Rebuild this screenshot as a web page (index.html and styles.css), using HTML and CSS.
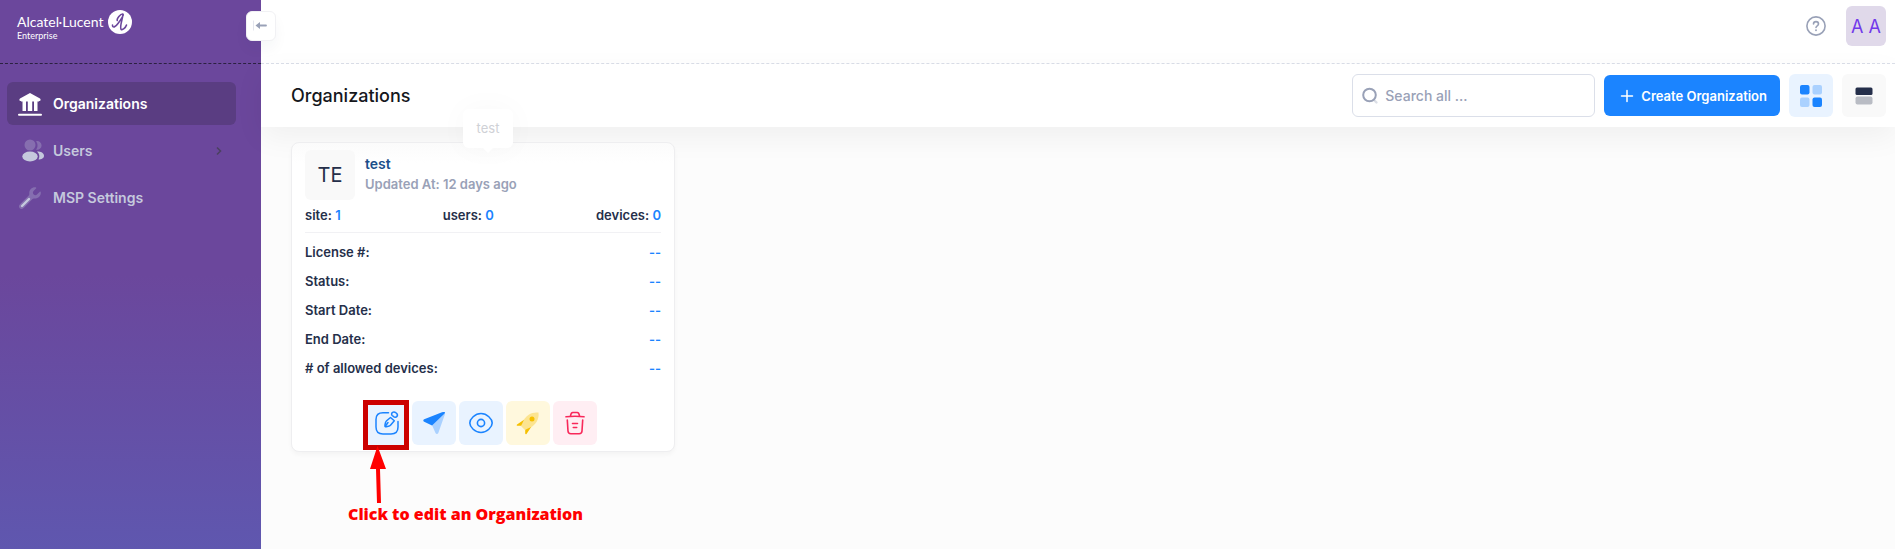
FILE: index.html
```html
<!DOCTYPE html>
<html lang="en">
<head>
    <meta charset="UTF-8">
    <meta name="viewport" content="width=device-width, initial-scale=1.0">
    <title>Organizations</title>
    <link rel="stylesheet" href="styles.css">
</head>
<body>
    <aside class="sidebar">
        <div class="brand">
            <a href="#" class="logo">
                <span class="logo-text">
                    <span class="logo-name">Alcatel·Lucent</span>
                    <span class="logo-sub">Enterprise</span>
                </span>
                <svg class="logo-mark" viewBox="0 0 24 24" width="24" height="24">
                    <circle cx="12" cy="12" r="12" fill="#fff"/>
                    <path d="M4.500 15C4.500 18.500 7.500 17 10 13.500C13 9.500 16.500 4.500 14.800 4C12.500 3.700 8.500 9 9.300 10.500M15 4.500C14.500 9 11.500 17 13 19.300C14.500 20.500 17.500 18 18.500 15" fill="none" stroke="#6b479c" stroke-width="1.600" stroke-linecap="round"/>
                </svg>
            </a>
            <button class="toggle" aria-label="Collapse menu">
                <svg viewBox="0 0 16 16" width="16" height="16">
                    <path d="M.5 2.500v10" stroke="#e4e6ee" stroke-width="1"/>
                    <path d="M6 7.500h7" stroke="#99a1b7" stroke-width="1.800" stroke-linecap="round"/>
                    <path d="M7 4v7L2.500 7.500z" fill="#99a1b7"/>
                </svg>
            </button>
        </div>
        <nav class="menu">
            <a href="#" class="menu-item active">
                <svg viewBox="0 0 24 24" width="24" height="24" fill="#fff">
                    <path d="M12 1L22 6.500C23 7.200 22.800 9 21.500 9H21V19H3V9H2.500C1.200 9 1 7.200 2 6.500z"/>
                    <path d="M3 9.500h1.500V19.500H3zM8 9.500h1.800V19.500H8zM14.200 9.500H16V19.500H14.200zM19.500 9.500H21V19.500H19.500z" fill="#5a3d82"/>
                    <path d="M1 22.800h22" stroke="#fff" stroke-width="2" stroke-linecap="round"/>
                </svg>
                <span>Organizations</span>
            </a>
            <a href="#" class="menu-item">
                <svg viewBox="0 0 24 24" width="24" height="24" fill="#c5c9dd">
                    <g opacity=".3"><circle cx="12" cy="6" r="5.500"/><path d="M18 2.300a4.300 4.300 0 1 1 0 8.200c2-2 2-6 0-8.200z"/></g>
                    <ellipse cx="12" cy="17.500" rx="7.700" ry="5"/>
                    <path d="M19 12.500c4 0 7 1.500 7 4.300 0 2.500-2.500 3.700-5.500 3.700 1.500-3 1-6-1.500-8z"/>
                </svg>
                <span>Users</span>
                <svg class="arrow" viewBox="0 0 8 10" width="8" height="10">
                    <path d="M2 1.500L5.500 5L2 8.500" fill="none" stroke="#4b4260" stroke-width="1.600"/>
                </svg>
            </a>
            <a href="#" class="menu-item">
                <svg viewBox="0 0 24 24" width="24" height="24" fill="#c5c9dd">
                    <path opacity=".3" d="M17.500 1.200c-3.500-.3-6.500 2.500-6.200 6.300.1 1.200-.2 1.800-1 2.600L2 18.300c-1.300 1.300-1.300 2.900-.3 3.900s2.700 1 4-.3l8.300-8.300c.8-.8 1.300-1 2.500-1 3.800.1 6.700-2.900 6.300-6.300-.1-.7-.7-.9-1.200-.4l-2.400 2.400c-1.200 1.200-2.400 1.200-3.500.1s-1.100-2.400.1-3.600L18 2.600c.6-.6.300-1.300-.5-1.400z"/>
                    <path d="M4 20L11 13" stroke="#c5c9dd" stroke-width="2.400" stroke-linecap="round"/>
                </svg>
                <span>MSP Settings</span>
            </a>
        </nav>
    </aside>

    <div class="wrapper">
        <header class="header">
            <button class="help" aria-label="Help">
                <svg viewBox="0 0 20 20" width="20" height="20" fill="none" stroke="#99a1b7" stroke-width="1.600" stroke-linecap="round">
                    <circle cx="10" cy="10" r="9.100"/>
                    <path d="M7.500 8c0-3.200 5-3.200 5 0 0 1.800-2.500 1.800-2.500 3.500"/>
                    <path d="M10 14.200v.1" stroke-width="1.900"/>
                </svg>
            </button>
            <button class="profile">A A</button>
        </header>

        <div class="toolbar">
            <h1>Organizations</h1>
            <div class="actions">
                <label class="search">
                    <svg viewBox="0 0 18 18" width="18" height="18" fill="none" stroke="#99a1b7">
                        <path d="M13.500 13.500L15.500 15.500" stroke-width="2.400" stroke-linecap="round" opacity=".35"/>
                        <circle cx="8.500" cy="8" r="6.300" stroke-width="2"/>
                    </svg>
                    <input type="text" placeholder="Search all ..." aria-label="Search all">
                </label>
                <button class="create-btn">
                    <svg viewBox="0 0 14 14" width="14" height="14" stroke="#fff" stroke-width="1.500" stroke-linecap="round">
                        <path d="M7 1.500v11M1.500 7h11"/>
                    </svg>
                    Create Organization
                </button>
                <button class="view-btn view-active" aria-label="Grid view">
                    <svg viewBox="0 0 22 22" width="22" height="22" fill="#1b84ff">
                        <rect width="9.500" height="9.500" rx="2"/>
                        <rect x="12.500" width="9.500" height="9.500" rx="2" opacity=".3"/>
                        <rect y="12.500" width="9.500" height="9.500" rx="2" opacity=".3"/>
                        <rect x="12.500" y="12.500" width="9.500" height="9.500" rx="2"/>
                    </svg>
                </button>
                <button class="view-btn" aria-label="List view">
                    <svg viewBox="0 0 18 18" width="18" height="18" fill="#252f4a">
                        <rect x=".5" y=".5" width="17" height="7.500" rx="1.500"/>
                        <rect x=".5" y="9.500" width="17" height="8" rx="2" opacity=".3"/>
                    </svg>
                </button>
            </div>
        </div>

        <main class="content">
            <article class="card">
                <div class="tip">test</div>
                <div class="card-head">
                    <div class="symbol">TE</div>
                    <div class="card-title">
                        <a href="#">test</a>
                        <span>Updated At: 12 days ago</span>
                    </div>
                </div>
                <div class="stats">
                    <span>site: <b>1</b></span>
                    <span>users: <b>0</b></span>
                    <span>devices: <b>0</b></span>
                </div>
                <dl class="details">
                    <div><dt>License #:</dt><dd>--</dd></div>
                    <div><dt>Status:</dt><dd>--</dd></div>
                    <div><dt>Start Date:</dt><dd>--</dd></div>
                    <div><dt>End Date:</dt><dd>--</dd></div>
                    <div><dt># of allowed devices:</dt><dd>--</dd></div>
                </dl>
                <div class="card-actions">
                    <div class="edit">
                        <button class="icon-btn blue" aria-label="Edit">
                            <svg viewBox="0 0 24 24" width="24" height="24" fill="none" stroke="#1b84ff" stroke-width="1.500" stroke-linecap="round" stroke-linejoin="round">
                                <path d="M13.500 1.800H8C3.500 1.800 1 4 1 8.500V16c0 4.500 2.500 7 7 7h8c4.500 0 7-2.500 7-7v-5.500"/>
                                <path d="M15.500 6.500l3.800 3.300-3.600 4.200c-.6.700-1.400 1.200-2.300 1.300l-2.200.4c-.9.200-1.500-.5-1.300-1.300l.5-2.400c.2-.8.600-1.600 1.200-2.200z"/>
                                <path d="M17.200 4.500c-1-1-.7-2.500.4-3.200 1-.6 2.400-.3 3.600.7s1.500 2.500.7 3.500-2.400 1-3.200.2z"/>
                                <path d="M13 11.500l-2.500 3.500"/>
                            </svg>
                        </button>
                        <span class="highlight"></span>
                        <svg class="pointer" viewBox="0 0 18 58" width="18" height="58">
                            <path d="M8.500 0L17 23H11L12 57H8L7 23H1z" fill="#f00"/>
                        </svg>
                        <span class="note">Click to edit an Organization</span>
                    </div>
                    <button class="icon-btn blue" aria-label="Send">
                        <svg viewBox="0 0 24 24" width="24" height="24" fill="#1b84ff">
                            <path d="M22 1.500L9.500 13l4 9c.5 1.200 2.300 1.200 2.800 0L23 3z" opacity=".3"/>
                            <path d="M22.500 1C22 .8 21 1 20 1.300L2.200 8.200c-1.200.5-1.200 2 0 2.500L10 14.500l12.800-12.300c.4-.4.200-1-.3-1.200z"/>
                        </svg>
                    </button>
                    <button class="icon-btn blue" aria-label="View">
                        <svg viewBox="0 0 24 24" width="24" height="24" fill="none" stroke="#1b84ff" stroke-width="1.600">
                            <path d="M12 2.500C18 2.500 23.200 8 23.200 12S18 21.500 12 21.500.8 16 .8 12 6 2.500 12 2.500z"/>
                            <circle cx="12" cy="12" r="3.600"/>
                        </svg>
                    </button>
                    <button class="icon-btn yellow" aria-label="Launch">
                        <svg viewBox="0 0 24 24" width="24" height="24" fill="#f6c000">
                            <path d="M22.500 1.500C16 .8 10 3.500 5.500 12.500l-.3 2.800 3.500 3.500 2.800-.3C20.500 14 23.200 8 22.500 1.500z" opacity=".35"/>
                            <circle cx="16" cy="8" r="2.500"/>
                            <path d="M8 8.800L1 13.500c-.6.500-.3 1.300.5 1.300h3.700zM15.200 16l-4.700 7c-.5.600-1.300.3-1.300-.5v-3.700z"/>
                        </svg>
                    </button>
                    <button class="icon-btn red" aria-label="Delete">
                        <svg viewBox="0 0 24 24" width="24" height="24" fill="none" stroke="#f8285a" stroke-width="1.600" stroke-linecap="round" stroke-linejoin="round">
                            <path d="M3 5.800c6-.8 12-.8 18 0"/>
                            <path d="M7.500 5.200C7.800 2.500 8.500 1.500 9.800 1.500h4.400c1.300 0 2 1 2.300 3.700"/>
                            <path d="M4.300 9l.7 11c.1 1.800 1 2.700 2.800 2.700h8.400c1.800 0 2.700-.9 2.800-2.700l.7-11"/>
                            <path d="M9.500 12.500h5M10.300 16.500h3.400"/>
                        </svg>
                    </button>
                </div>
            </article>
        </main>
    </div>
</body>
</html>
```
FILE: styles.css
```css
* {
    box-sizing: border-box;
}

body {
    margin: 0;
    display: flex;
    min-height: 100vh;
    font-family: Inter, "Liberation Sans", sans-serif;
    font-size: 13px;
    color: #252f4a;
    background-color: #fcfcfc;
}

a {
    text-decoration: none;
}

button {
    display: flex;
    align-items: center;
    justify-content: center;
    padding: 0;
    border: none;
    border-radius: 6px;
    font-family: inherit;
    cursor: pointer;
}

svg {
    display: block;
    flex-shrink: 0;
    overflow: visible;
}

/* Sidebar */
.sidebar {
    width: 261px;
    flex-shrink: 0;
    background: linear-gradient(180deg, #6b479c 50%, #5f57af 100%);
}

.brand {
    position: relative;
    height: 64px;
    padding: 10px 17px;
    border-bottom: 1px dashed #2b2140;
}

.logo {
    display: flex;
    align-items: flex-start;
    gap: 5px;
    color: #fff;
    font-family: Lato, sans-serif;
}

.logo-text {
    display: flex;
    flex-direction: column;
    padding-top: 4px;
}

.logo-name {
    font-size: 14px;
    line-height: 16px;
}

.logo-sub {
    font-size: 9px;
    line-height: 12px;
}

.toggle {
    position: absolute;
    top: 11px;
    right: -15px;
    width: 30px;
    height: 30px;
    background-color: #fff;
    border: 1px solid #f1f1f4;
    box-shadow: 0 8px 14px rgba(15, 42, 81, 0.04);
}

.menu {
    display: flex;
    flex-direction: column;
    gap: 4px;
    padding: 18px 25px 0 7px;
}

.menu-item {
    display: flex;
    align-items: center;
    gap: 11px;
    height: 43px;
    padding: 0 11px;
    border-radius: 6px;
    font-size: 14px;
    font-weight: 600;
    color: #c5c9dd;
}

.menu-item.active {
    background-color: #5a3d82;
    color: #fff;
}

.arrow {
    margin-left: auto;
    margin-right: 2px;
}

/* Header */
.wrapper {
    flex: 1;
    min-width: 0;
}

.header {
    display: flex;
    justify-content: flex-end;
    align-items: flex-start;
    gap: 20px;
    height: 64px;
    padding: 6px 9px;
    background-color: #fff;
    border-bottom: 1px dashed #dbdfe9;
}

.help {
    height: 40px;
    background: none;
}

.profile {
    width: 40px;
    height: 40px;
    background-color: #e0d9ea;
    color: #7239ea;
    font-size: 18px;
}

.toolbar {
    display: flex;
    align-items: center;
    justify-content: space-between;
    height: 63px;
    padding: 0 9px 0 30px;
    background-color: #fff;
    box-shadow: 0 10px 30px rgba(0, 0, 0, 0.05);
}

.toolbar h1 {
    margin: 0;
    font-size: 18px;
    font-weight: 500;
    color: #15171c;
}

.actions {
    display: flex;
    align-items: center;
    gap: 9px;
}

.search {
    display: flex;
    align-items: center;
    gap: 6px;
    width: 243px;
    height: 43px;
    padding: 0 8px;
    border: 1px solid #dbdfe9;
    border-radius: 6px;
}

.search input {
    flex: 1;
    min-width: 0;
    padding: 0;
    border: none;
    outline: none;
    background: none;
    font-family: inherit;
    font-size: 14px;
    font-weight: 500;
}

.search input::placeholder {
    color: #99a1b7;
}

.create-btn {
    gap: 7px;
    height: 41px;
    padding: 0 13px 0 16px;
    background-color: #1b84ff;
    color: #fff;
    font-size: 13px;
    font-weight: 600;
}

.view-btn {
    width: 44px;
    height: 43px;
    background-color: #f9f9f9;
}

.view-active {
    background-color: #e9f3ff;
}

/* Organization card */
.content {
    display: grid;
    grid-template-columns: repeat(auto-fill, 384px);
    padding: 15px 30px;
}

.card {
    position: relative;
    padding: 7px 13px 6px;
    background-color: #fff;
    background-image: linear-gradient(#fbfbfb, #fff 20px);
    border: 1px solid #eeeef0;
    border-radius: 8px;
    box-shadow: 0 3px 4px rgba(0, 0, 0, 0.03);
    font-weight: 600;
}

.card-head {
    display: flex;
    align-items: center;
    gap: 10px;
}

.symbol {
    display: flex;
    align-items: center;
    justify-content: center;
    width: 50px;
    height: 50px;
    background-color: #f9f9f9;
    border-radius: 6px;
    font-size: 20px;
    font-weight: 400;
}

.card-title {
    display: flex;
    flex-direction: column;
    padding-bottom: 2px;
    line-height: 20px;
}

.card-title a {
    font-size: 14px;
    color: #1b4f8a;
}

.card-title span {
    color: #99a1b7;
}

.stats {
    display: flex;
    justify-content: space-between;
    height: 33px;
    padding-top: 5px;
    border-bottom: 1px solid #f1f1f4;
    line-height: 20px;
}

.stats b,
.details dd {
    color: #1b84ff;
    font-weight: 600;
}

.details {
    margin: 5px 0 18px;
}

.details div {
    display: flex;
    justify-content: space-between;
    line-height: 29px;
}

.details dd {
    margin: 0;
}

.card-actions {
    display: flex;
    justify-content: center;
    gap: 3px;
    padding-right: 4px;
}

.icon-btn {
    width: 44px;
    height: 44px;
}

.blue {
    background-color: #e9f3ff;
}

.yellow {
    background-color: #fff8dd;
}

.red {
    background-color: #ffeef3;
}

/* Tooltip fading over the card */
.tip {
    position: absolute;
    top: -34px;
    left: 171px;
    width: 50px;
    padding: 10px 0;
    border-radius: 6px;
    background-color: #fff;
    box-shadow: 0 0 30px rgba(0, 0, 0, 0.03);
    color: #cfd1d6;
    font-weight: 400;
    line-height: 19px;
    text-align: center;
}

.tip::after {
    content: "";
    position: absolute;
    top: 100%;
    left: 20px;
    border: 5px solid transparent;
    border-top-color: #fff;
}

/* Callout on the edit button */
.edit {
    position: relative;
}

.highlight {
    position: absolute;
    top: -1px;
    left: -2px;
    width: 46px;
    height: 50px;
    border: 5px solid #cc0000;
}

.pointer {
    position: absolute;
    top: 45px;
    left: 4px;
}

.note {
    position: absolute;
    top: 103px;
    left: -17px;
    color: #f00;
    font-family: "Open Sans", sans-serif;
    font-size: 16px;
    font-weight: 800;
    line-height: 20px;
    white-space: nowrap;
}
```
